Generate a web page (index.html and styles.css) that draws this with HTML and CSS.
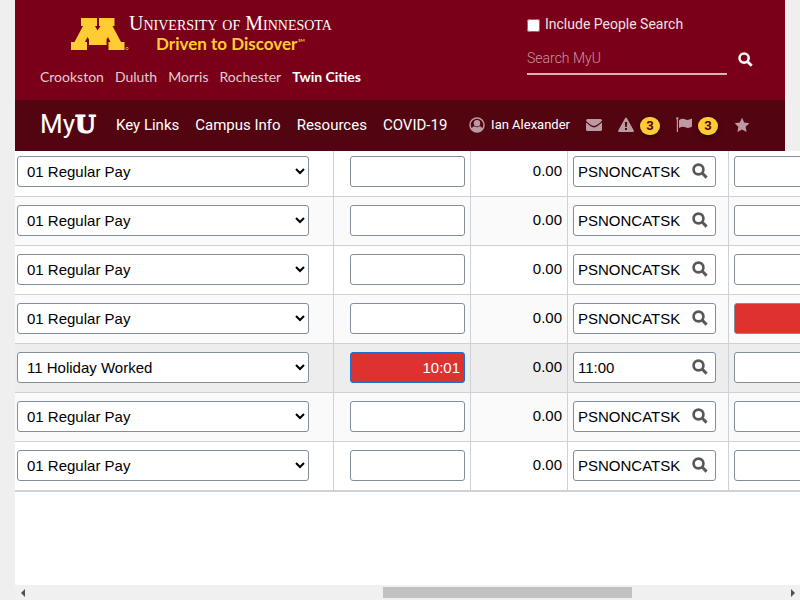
FILE: index.html
```html
<!DOCTYPE html>
<html lang="en">
<head>
<meta charset="utf-8">
<title>MyU</title>
<link rel="stylesheet" href="styles.css">
</head>
<body>
<svg class="defs" aria-hidden="true">
  <symbol id="search" viewBox="0 0 16 16"><circle cx="6.5" cy="6.5" r="4.9" fill="none" stroke="currentColor" stroke-width="2.7"/><path d="M10.3 10.3L14.6 14.6" stroke="currentColor" stroke-width="3"/></symbol>
</svg>
<header class="site">
  <div class="top">
    <div class="brand">
      <a class="logo" href="#">
        <svg class="block-m" viewBox="0 0 58 33" aria-hidden="true"><path fill="#ffcc33" d="M10 0H26V8H24L26.500 12.500L29.500 8H28V0H43.500V8H41.500L50 24H53.500V32H37.500V24H39.500L37 19L35.500 21.500V27H18V21.500L16.500 19L14 24H16V32H0V24H3.500L12 8H10Z"/><circle cx="56" cy="30.500" r="1.200" fill="none" stroke="#ffcc33" stroke-width=".7"/></svg>
        <span class="words"><span class="uni">University of Minnesota</span><span class="tag">Driven to Discover<small>℠</small></span></span>
      </a>
      <nav class="campuses"><a href="#">Crookston</a><a href="#">Duluth</a><a href="#">Morris</a><a href="#">Rochester</a><a href="#" class="on">Twin Cities</a></nav>
    </div>
    <form class="find">
      <label class="people"><input type="checkbox">Include People Search</label>
      <div class="line"><input type="text" placeholder="Search MyU" aria-label="Search MyU"><button type="button" aria-label="Search"><svg viewBox="0 0 16 16"><use href="#search"/></svg></button></div>
    </form>
  </div>
  <nav class="bar">
    <a class="myu" href="#">My<b>U</b></a>
    <a href="#">Key Links</a><a href="#">Campus Info</a><a href="#">Resources</a><a href="#">COVID-19</a>
    <div class="tools">
      <a class="user" href="#"><svg viewBox="0 0 16 16"><circle cx="8" cy="8" r="7" fill="none" stroke="currentColor" stroke-width="1.500"/><circle cx="8" cy="6.200" r="3.200" fill="currentColor"/><path fill="currentColor" d="M2.500 12C3.200 10 4.500 9.300 5.500 9.300C7 10.500 9 10.500 10.500 9.300C11.500 9.300 12.800 10 13.500 12C11 16 5 16 2.500 12Z"/></svg><span>Ian Alexander</span></a>
      <a class="mail" href="#" aria-label="Mail"><svg viewBox="0 0 16 16"><path fill="currentColor" d="M1.500 2H14.500Q16 2 16 3.500C15 5.500 10 9 8 9S1 5.500 0 3.500Q0 2 1.500 2ZM0 5.500C3 8 6 10.500 8 10.500S13 8 16 5.500V12.500Q16 14 14.500 14H1.500Q0 14 0 12.500Z"/></svg></a>
      <a class="alert" href="#" aria-label="Alerts, 3"><svg viewBox="0 0 16 16"><path fill="currentColor" fill-rule="evenodd" d="M7.200 1Q8 0 8.800 1L15.800 13.500Q16 15 15 15H1Q0 15 .2 13.500ZM6.800 5L7.200 10H8.800L9.200 5ZM7 11V13H9V11Z"/></svg><span class="badge">3</span></a>
      <a class="flag" href="#" aria-label="Flags, 3"><svg viewBox="0 0 16 16"><path fill="currentColor" d="M0 1.500A1.300 1.300 0 0 1 2.600 1.500L2 2.600V15H.8V2.600ZM3 3.200C6 1 8 1.800 9.500 2.600C11.500 3.500 13.500 2.600 16 1.500V9.500C13 11.500 11 11 9.500 10.300C7.500 9.300 5.500 9.500 3 11Z"/></svg><span class="badge">3</span></a>
      <a class="star" href="#" aria-label="Favorites"><svg viewBox="0 0 16 16"><path fill="currentColor" d="M8 .8L10.200 5.500L15.400 6.200L11.600 9.800L12.600 15L8 12.500L3.400 15L4.400 9.800L.6 6.200L5.800 5.500Z"/></svg></a>
    </div>
  </nav>
</header>
<main>
  <table>
    <colgroup><col class="c-code"><col class="c-qty"><col class="c-total"><col class="c-src"><col></colgroup>
    <tbody id="rows"></tbody>
  </table>
  <div class="scroll" aria-hidden="true"><span class="arrow left"></span><span class="track"><span class="thumb"></span></span><span class="arrow right"></span></div>
</main>
<script src="script.js"></script>
</body>
</html>
```
FILE: styles.css
```css
* { box-sizing: border-box; }
body { margin: 0; padding-left: 15px; min-height: 100vh; display: flex; flex-direction: column; background: #efefef; font: 15px/18px "Liberation Sans", Arial, sans-serif; color: #000; overflow-x: hidden; }
a { color: inherit; text-decoration: none; }
svg { display: block; width: 16px; height: 16px; flex: none; }
.defs { position: absolute; width: 0; height: 0; }
.site { margin-right: 15px; font-family: Roboto, sans-serif; color: #fff; }
.top { display: flex; justify-content: space-between; height: 100px; padding: 14px 32px 0 25px; background: #7a0019; }
.logo { display: flex; padding-left: 31px; height: 53px; }
.block-m { width: 58px; height: 33px; margin-top: 4px; }
.words { display: flex; flex-direction: column; align-items: center; color: #fff; }
.uni { font: 20px/18px "Liberation Serif", serif; font-variant: small-caps; white-space: nowrap; }
.tag { font: bold 17px/24px Lato, sans-serif; color: #fc3; white-space: nowrap; }
.tag small { font-size: 10px; line-height: 10px; vertical-align: 4px; font-weight: normal; }
.campuses { display: flex; gap: 11px; font: 14px/20px Lato, sans-serif; color: #e4ccd1; white-space: nowrap; }
.campuses .on { font-weight: bold; color: #fff; }
.find { width: 226px; }
.people { display: flex; align-items: center; gap: 5px; font-size: 14px; line-height: 20px; color: #f0e0e4; }
.people input { margin: 3px 0 0; width: 13px; height: 13px; }
.line { display: flex; align-items: center; margin-top: 10px; }
.line input { width: 200px; height: 31px; padding: 0 0 1px; border: 0; border-bottom: 2px solid #d7b2ba; background: none; color: #fff; font: 300 14px Roboto, sans-serif; }
.line input::placeholder { color: #c795a0; }
.line button { margin: 0 0 0 11px; padding: 0; border: 0; background: none; color: #fff; }
.line svg { width: 15px; height: 15px; }
.bar { display: flex; align-items: center; gap: 16px; height: 51px; padding: 0 35px 2px 25px; background: #520511; font-size: 15px; white-space: nowrap; }
.myu { width: 60px; font: 26px/32px Roboto, sans-serif; }
.myu b { font: 900 24px/32px "DejaVu Serif", serif; -webkit-text-stroke: 1px #fff; }
.tools { display: flex; align-items: center; gap: 16px; margin-left: auto; color: #bd9aa2; }
.tools a { display: flex; align-items: center; gap: 6px; }
.user { font-size: 13px; }
.user span { color: #fff; }
.badge { display: flex; align-items: center; justify-content: center; width: 20px; height: 18px; margin-top: 2px; border-radius: 9px; background: #fc3; color: #520511; font-size: 13px; font-weight: bold; box-shadow: 0 2px 4px #0008; }
main { flex: 1; display: flex; flex-direction: column; background: #fff; overflow: hidden; }
table { width: 100%; table-layout: fixed; border-collapse: separate; border-spacing: 0; border-bottom: 1px solid #cdd2d8; }
.c-code { width: 319px; }
.c-qty { width: 137px; }
.c-total { width: 97px; }
.c-src { width: 161px; }
td { padding: 8px 5px 9px; border-right: 1px solid #cdd2d8; border-bottom: 1px solid #cdd2d8; overflow: hidden; vertical-align: top; }
td:first-child { padding-left: 2px; }
td:nth-child(2) { padding-left: 16px; }
td:nth-child(3) { padding-right: 5px; text-align: right; line-height: 30px; }
td:last-child { padding-right: 0; border-right: 0; }
tr:first-child td { padding-top: 5px; }
tr:nth-child(even) { background: #fafafa; }
tr.current { background: #ededed; }
td input, td select { display: block; width: 115px; height: 31px; margin: 0; padding: 0 4px; border: 1px solid #848e98; border-radius: 3px; background: #fff; color: #000; font: 15px "Liberation Sans", Arial, sans-serif; }
td select { width: 292px; padding: 0 5px; }
td:nth-child(2) input { text-align: right; }
.lookup { display: flex; align-items: center; width: 143px; height: 31px; border: 1px solid #848e98; border-radius: 3px; background: #fff; }
.lookup input { width: 117px; height: 29px; border: 0; background: none; }
.lookup button { margin: 0; padding: 0 0 2px 1px; border: 0; background: none; color: #585858; }
td:last-child input { width: 150px; }
td input.error { background: #e03131; color: #fff; }
td input.focus { border-color: #1a6fd0; }
.scroll { display: flex; align-items: center; height: 15px; margin-top: auto; background: #f0f0f0; }
.track { flex: 1; height: 11px; padding-left: 45%; }
.thumb { display: block; width: 62%; height: 11px; background: #c1c1c1; }
.arrow { width: 15px; height: 8px; display: flex; justify-content: center; }
.arrow::before { content: ""; border: 4px solid transparent; }
.left::before { border-right-color: #505050; border-left: 0; }
.right::before { border-left-color: #505050; border-right: 0; }
```
FILE: script.js
```js
const rows = [
  {}, {}, {}, { flagged: true },
  { code: "11 Holiday Worked", qty: "10:01", source: "11:00", current: true },
  {}, {}
];
document.getElementById("rows").innerHTML = rows.map((r, i) => `
  <tr class="${r.current ? "current" : ""}">
    <td><select aria-label="Time reporting code, row ${i + 1}"><option>${r.code || "01 Regular Pay"}</option></select></td>
    <td><input type="text" aria-label="Quantity, row ${i + 1}" value="${r.qty || ""}" class="${r.current ? "error focus" : ""}"></td>
    <td>0.00</td>
    <td><div class="lookup"><input type="text" aria-label="Source, row ${i + 1}" value="${r.source || "PSNONCATSK"}"><button type="button" aria-label="Look up"><svg viewBox="0 0 16 16"><use href="#search"/></svg></button></div></td>
    <td><input type="text" aria-label="Detail, row ${i + 1}" class="${r.flagged ? "error" : ""}"></td>
  </tr>`).join("");
```
